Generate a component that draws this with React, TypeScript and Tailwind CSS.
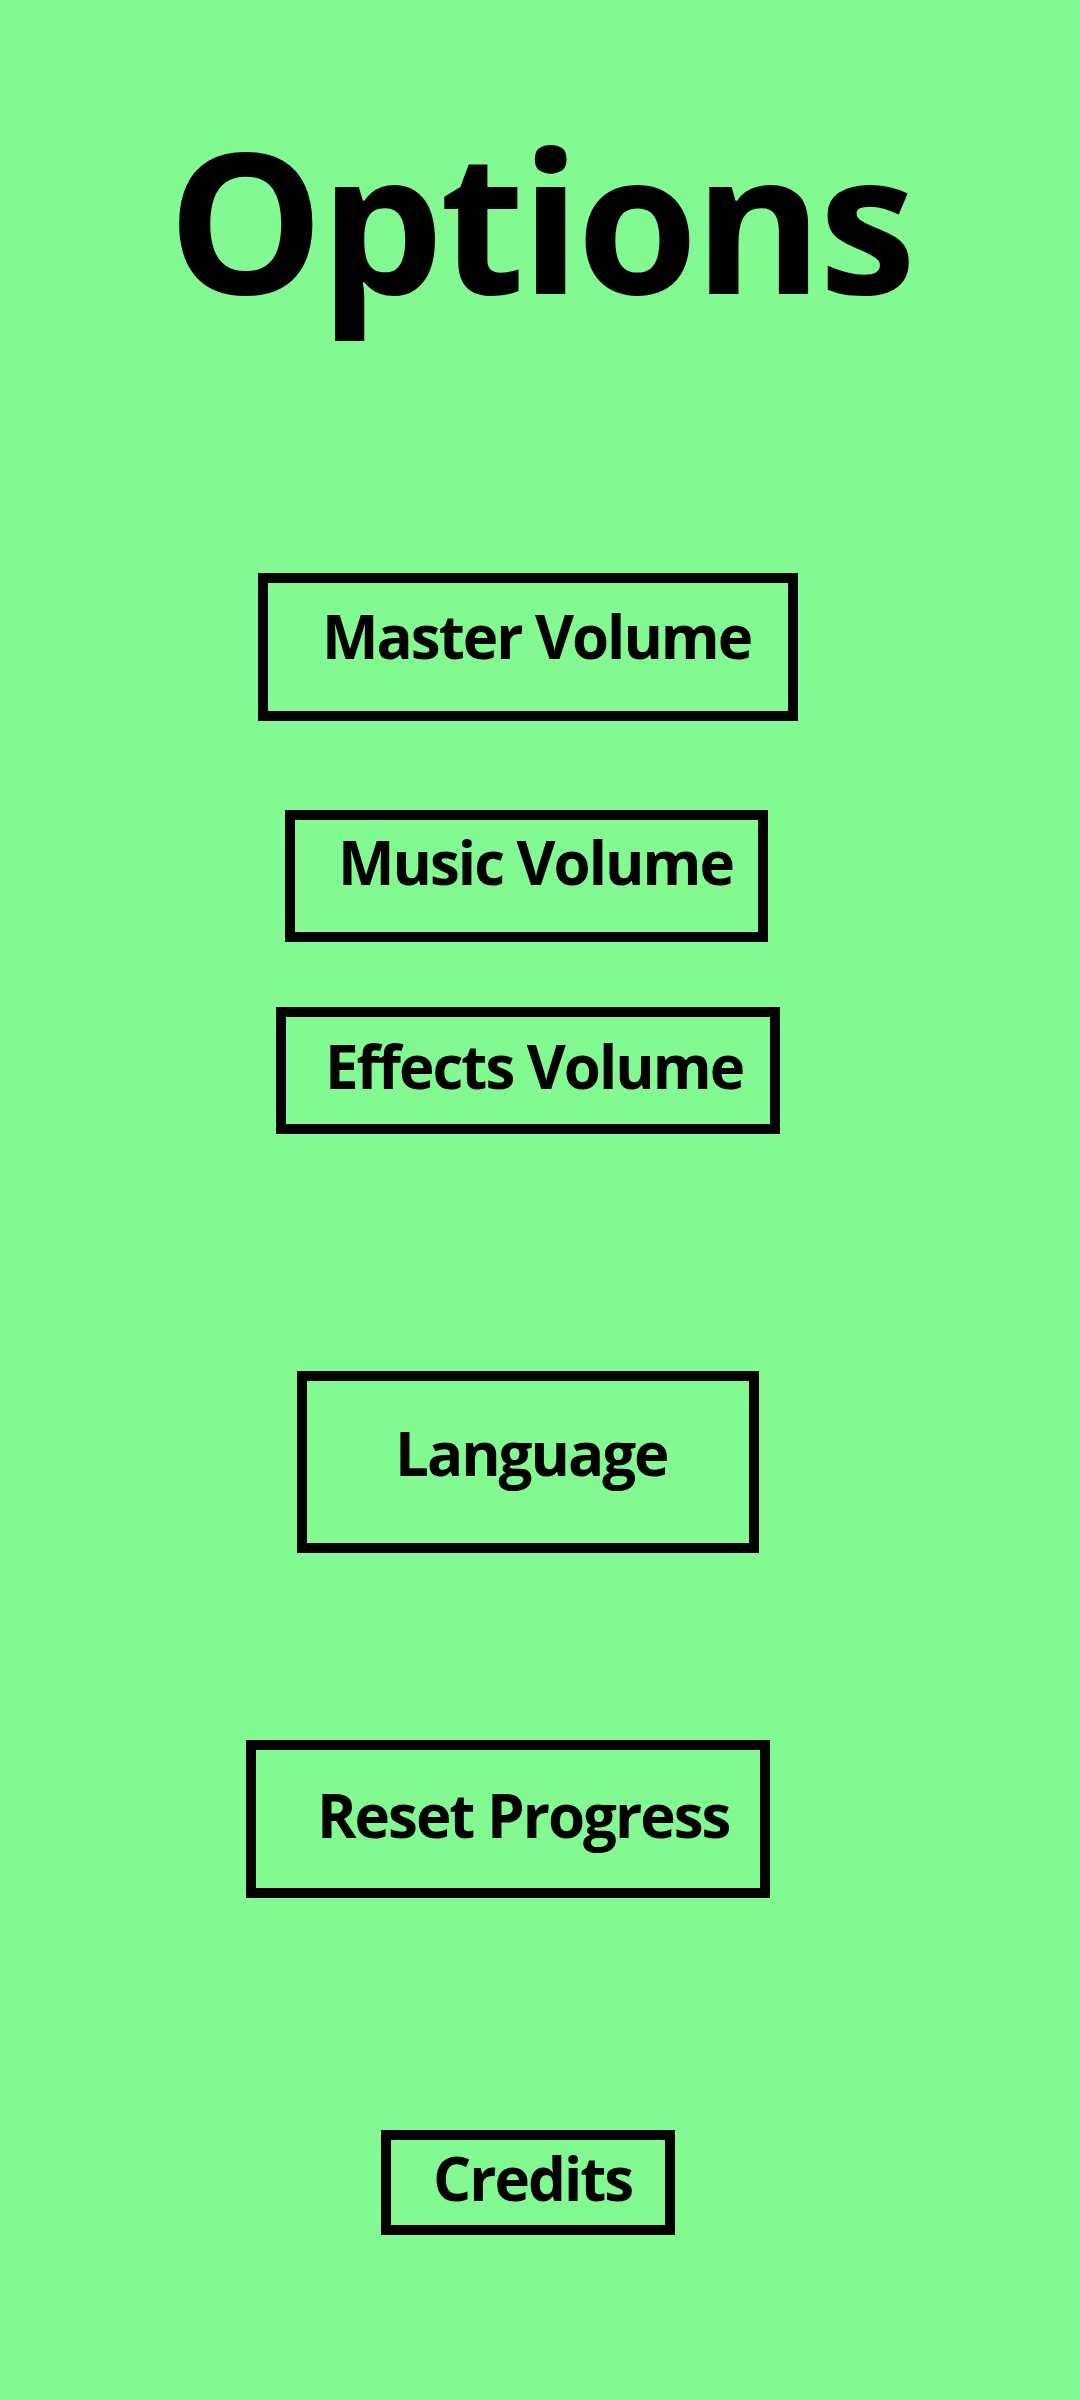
import React from 'react';

interface OptionButton {
  label: string;
  box: string;
  text: string;
}

// each button has its own size in the source screen, so sizes are explicit
const buttons: OptionButton[] = [
  { label: 'Master Volume', box: 'mt-[257px] ml-[258px] w-[540px] h-[148px]', text: 'pt-[23px] pl-[54px]' },
  { label: 'Music Volume', box: 'mt-[89px] ml-[285px] w-[483px] h-[132px]', text: 'pt-[12px] pl-[43px]' },
  { label: 'Effects Volume', box: 'mt-[65px] ml-[276px] w-[504px] h-[127px]', text: 'pt-[19px] pl-[39px]' },
  { label: 'Language', box: 'mt-[237px] ml-[297px] w-[462px] h-[182px]', text: 'pt-[42px] pl-[88px]' },
  { label: 'Reset Progress', box: 'mt-[187px] ml-[246px] w-[524px] h-[158px]', text: 'pt-[35px] pl-[61px]' },
  { label: 'Credits', box: 'mt-[232px] ml-[381px] w-[294px] h-[105px]', text: 'pt-[8px] pl-[42px]' },
];

const App = () => {
  return (
    <div className="min-h-[2400px] w-[1080px] bg-[#82f991] text-black font-['Open_Sans',sans-serif] flex flex-col">
      <h1 className="pt-[120px] text-center text-[196px] font-bold leading-none tracking-[-4px]">Options</h1>

      {buttons.map((b) => (
        <div
          key={b.label}
          role="button"
          className={`${b.box} box-border border-[10px] border-black cursor-pointer`}
        >
          <span className={`block ${b.text} text-[60px] font-bold leading-none tracking-[-2px] whitespace-nowrap`}>
            {b.label}
          </span>
        </div>
      ))}
    </div>
  );
};

export default App;
